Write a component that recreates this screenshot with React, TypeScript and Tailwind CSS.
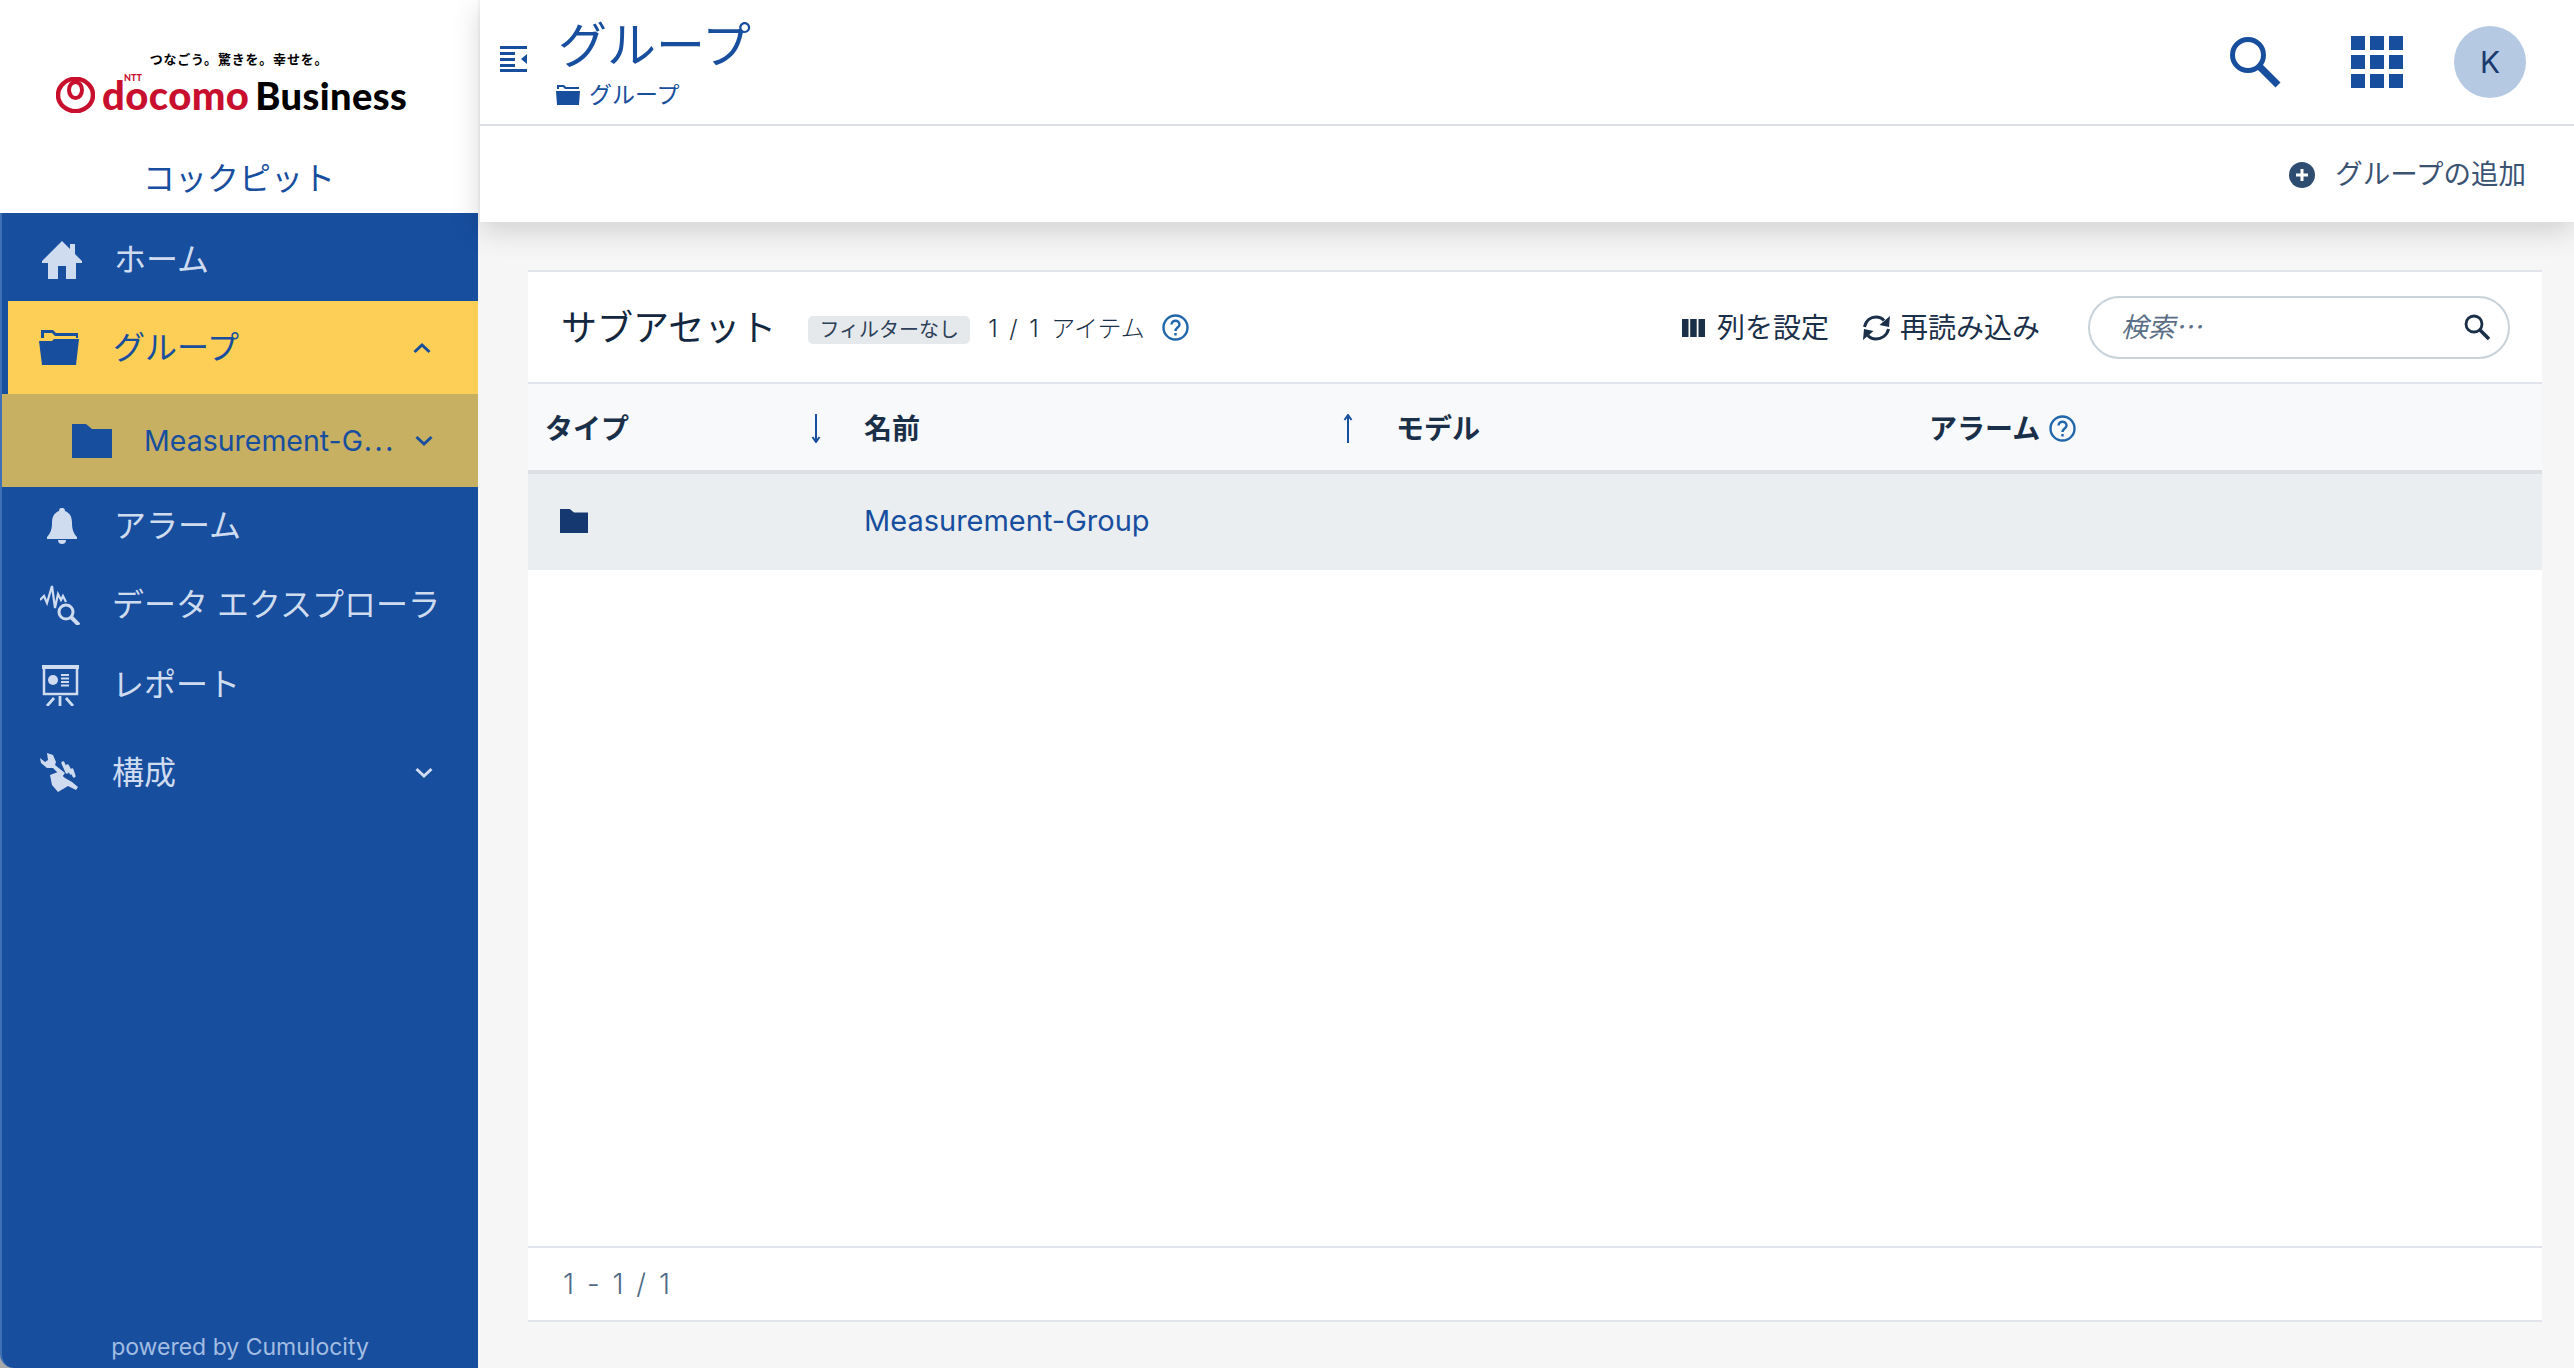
import { ReactNode } from "react";

const blue = "#174e9e";

function HomeIcon() {
  return (
    <svg width="40" height="38" viewBox="0 0 40 38" fill="#cfdcf0">
      <path d="M20 0 L28 8 V3 H33 V13 L40 20 V22 H34 V38 H24 V25 H16 V38 H6 V22 H0 V20 Z" />
    </svg>
  );
}

function FolderOpenIcon() {
  return (
    <svg width="40" height="35" viewBox="0 0 40 35" fill={blue}>
      <path d="M2 0 H14 L17 3 H39 V8 H37 V6 H16 L13 3 H5 V8 H2 Z" />
      <path d="M0 11 H13 L15 9 H40 L37 35 H3 Z" />
    </svg>
  );
}

function FolderIcon({ w, h, color }: { w: number; h: number; color: string }) {
  return (
    <svg width={w} height={h} viewBox="0 0 40 34" fill={color}>
      <path d="M0 0 H14 L20 5 H40 V34 H0 Z" />
    </svg>
  );
}

function BellIcon() {
  return (
    <svg width="30" height="36" viewBox="0 0 30 36" fill="#cfdcf0">
      <path d="M15 0 C17 0 18 1 18 3 C23 5 25 9 25 15 C25 22 27 26 30 29 V31 H0 V29 C3 26 5 22 5 15 C5 9 7 5 12 3 C12 1 13 0 15 0 Z" />
      <path d="M11 32 H19 C19 35 17 36 15 36 C13 36 11 35 11 32 Z" />
    </svg>
  );
}

function DataIcon() {
  return (
    <svg width="40" height="40" viewBox="0 0 40 40" fill="none" stroke="#cfdcf0" strokeWidth="2.2">
      <path d="M0 15 L4 11 L7 18 L12 1 L15 23 L18 9 L21 15 L23 11 L26 17" />
      <circle cx="26" cy="27" r="7" strokeWidth="3" />
      <path d="M31 32 L39 40" strokeWidth="4" />
    </svg>
  );
}

function ReportIcon() {
  return (
    <svg width="37" height="41" viewBox="0 0 37 41" fill="none" stroke="#cfdcf0">
      <path d="M0 2 H37" strokeWidth="4" />
      <path d="M2 3 V29 H35 V3" strokeWidth="2.5" />
      <circle cx="11" cy="15" r="5" fill="#cfdcf0" stroke="none" />
      <path d="M19 10 H27 M19 13.5 H27 M19 17 H27 M19 20.5 H27" strokeWidth="2" />
      <path d="M18 31 V41 M12 33 L5 41 M24 33 L31 41" strokeWidth="2.8" />
    </svg>
  );
}

function ConfigIcon() {
  return (
    <svg width="40" height="41" viewBox="0 0 40 41" fill="#cfdcf0">
      <path d="M7 1 L13 3 L16 10 L15 13 L25 21 L22 25 L13 16 L7 16 L1 11 L0 6 L5 10 L8 8 Z" />
      <path d="M10 23 L18 20 L25 26 L32 30 L38 35 L36 38 L28 34 L18 40 L12 33 Z" />
      <path d="M23 11 L27 20 M27.5 14 L31 21 M32 18 L34 24" stroke="#cfdcf0" strokeWidth="3.2" strokeLinecap="round" fill="none" />
    </svg>
  );
}

function Chevron({ up, color }: { up?: boolean; color: string }) {
  return (
    <svg width="18" height="12" viewBox="0 0 18 12" fill="none" stroke={color} strokeWidth="3">
      <path d={up ? "M1.5 10 L9 3 L16.5 10" : "M1.5 2 L9 9 L16.5 2"} />
    </svg>
  );
}

function HelpIcon() {
  return (
    <svg width="27" height="27" viewBox="0 0 27 27" fill="none" stroke="#1f66ab" strokeWidth="2.4">
      <circle cx="13.5" cy="13.5" r="12" />
      <path d="M9.5 10.5 C9.5 5.5 17.5 5.5 17.5 10.5 C17.5 13.5 13.5 13.5 13.5 17" />
      <path d="M13.5 19 V21.5" />
    </svg>
  );
}

function NavItem({ icon, label, h, pl, chevron }: { icon: ReactNode; label: string; h: string; pl: string; chevron?: boolean }) {
  return (
    <div className={`flex items-center ${h} ${pl} text-[#cfdcf0] text-[32px]`}>
      <div className="mr-[32px] flex w-[40px] shrink-0 justify-center">{icon}</div>
      <span className="flex-1 whitespace-nowrap">{label}</span>
      {chevron && (
        <span className="mr-[45px]">
          <Chevron color="#cfdcf0" />
        </span>
      )}
    </div>
  );
}

function Sidebar() {
  return (
    <aside className="flex h-full w-[478px] shrink-0 flex-col bg-[#a8a8a8]">
      <div className="flex h-[213px] flex-col items-center bg-white">
        <div className="mt-[49px] whitespace-nowrap text-[13px] font-bold leading-[20px] tracking-[0.8px] text-black">つなごう。驚きを。幸せを。</div>
        <div className="mt-[6px] flex items-center gap-[7px] self-start pl-[56px]">
          <svg width="39" height="36" viewBox="0 0 39 36" fill="none" stroke="#c8102e">
            <ellipse cx="19.5" cy="18" rx="17.5" ry="16.2" strokeWidth="4.5" />
            <ellipse cx="19.5" cy="13" rx="6.5" ry="8" strokeWidth="4" />
          </svg>
          <div className="flex items-baseline gap-[6px] text-[38px] font-black leading-[40px] [font-family:'Lato','Liberation_Sans',sans-serif]">
            <span className="relative text-[40px] tracking-[0.4px] text-[#c8102e]">
              docomo
              <span className="absolute left-[22px] top-[-2px] text-[9px] leading-[10px] tracking-normal">NTT</span>
            </span>
            <span className="tracking-[0.4px] text-black">Business</span>
          </div>
        </div>
        <div className="mt-[42px] text-[32px] leading-[44px] text-[#174e9e]">コックピット</div>
      </div>
      <nav className="flex flex-1 flex-col rounded-bl-[14px] border-l-2 border-[#3f6fb5] bg-[#174e9e]">
        <NavItem icon={<HomeIcon />} label="ホーム" h="h-[88px] pt-[6px]" pl="pl-[40px]" />
        <div className="ml-[6px] flex h-[93px] items-center bg-[#fdcf56] pl-[31px] text-[32px] text-[#174e9e]">
          <div className="mr-[34px] flex w-[40px] justify-center">
            <FolderOpenIcon />
          </div>
          <span className="flex-1">グループ</span>
          <span className="mr-[47px]">
            <Chevron up color={blue} />
          </span>
        </div>
        <div className="flex h-[93px] items-center bg-[#c8b063] pl-[70px] text-[#174e9e]">
          <FolderIcon w={40} h={34} color={blue} />
          <span className="ml-[32px] flex-1 whitespace-nowrap text-[28.5px]">
            Measurement-G<span className="[font-family:'Noto_Sans_CJK_JP',sans-serif]">⋯</span>
          </span>
          <span className="mr-[45px]">
            <Chevron color={blue} />
          </span>
        </div>
        <NavItem icon={<BellIcon />} label="アラーム" h="h-[78px]" pl="pl-[40px]" />
        <NavItem icon={<DataIcon />} label="データ エクスプローラ" h="h-[80px]" pl="pl-[38px]" />
        <NavItem icon={<ReportIcon />} label="レポート" h="h-[80px]" pl="pl-[38px]" />
        <NavItem icon={<ConfigIcon />} label="構成" h="h-[93px] pt-[2px]" pl="pl-[38px]" chevron />
        <div className="mt-auto pb-[6px] text-center text-[23px] leading-[30px] text-[#a3bde2]">powered by Cumulocity</div>
      </nav>
    </aside>
  );
}

function Header() {
  return (
    <header className="relative z-10 bg-white shadow-[0_8px_28px_rgba(0,0,0,0.16)]">
      <div className="flex h-[126px] items-center border-b-2 border-[#dcdfe4] pl-[20px] pr-[48px]">
        <svg className="mt-[-6px]" width="27" height="26" viewBox="0 0 27 26" fill={blue}>
          <path d="M0 0 H27 V3 H0 Z M0 6 H15 V9 H0 Z M0 12 H15 V15 H0 Z M0 18 H15 V21 H0 Z M0 23 H27 V26 H0 Z" />
          <path d="M27 8 V18 L21 13 Z" />
        </svg>
        <div className="ml-[31px] flex flex-col">
          <h1 className="text-[49px] font-normal leading-[62px] text-[#174e9e]">グループ</h1>
          <div className="mt-[3px] flex items-center gap-[9px] text-[23px] leading-[30px] text-[#174e9e]">
            <svg className="ml-[-2px]" width="24" height="20" viewBox="0 0 24 20" fill={blue}>
              <path d="M1 0 H8 L10 2 H23 V4 H9 L7 2 H3 V4 H1 Z" />
              <path d="M0 6 H24 L23 20 H1 Z" />
            </svg>
            グループ
          </div>
        </div>
        <div className="ml-auto flex items-center">
          <svg width="51" height="51" viewBox="0 0 51 51" fill="none" stroke={blue}>
            <circle cx="18" cy="18" r="15.5" strokeWidth="5" />
            <path d="M29 29 L48 48" strokeWidth="7" />
          </svg>
          <svg className="ml-[70px]" width="52" height="52" viewBox="0 0 52 52" fill={blue}>
            <path d="M0 0 H14 V14 H0 Z M19 0 H33 V14 H19 Z M38 0 H52 V14 H38 Z M0 19 H14 V33 H0 Z M19 19 H33 V33 H19 Z M38 19 H52 V33 H38 Z M0 38 H14 V52 H0 Z M19 38 H33 V52 H19 Z M38 38 H52 V52 H38 Z" />
          </svg>
          <div className="ml-[51px] flex h-[72px] w-[72px] items-center justify-center rounded-full bg-[#b5c9e2] text-[30px] text-[#1a3a6e]">K</div>
        </div>
      </div>
      <div className="flex h-[96px] items-center justify-end pr-[48px] pt-[2px] text-[27.5px] text-[#3a5373]">
        <svg className="mr-[20px]" width="26" height="26" viewBox="0 0 26 26">
          <circle cx="13" cy="13" r="13" fill="#2e4d70" />
          <path d="M13 7 V19 M7 13 H19" stroke="#fff" strokeWidth="3" />
        </svg>
        グループの追加
      </div>
    </header>
  );
}

function Arrow({ up }: { up?: boolean }) {
  return (
    <svg width="10" height="29" viewBox="0 0 10 29" fill="none" stroke={blue} strokeWidth="2">
      {up ? <path d="M5 29 V3 M1.5 6 L5 1 L8.5 6" /> : <path d="M5 0 V26 M1.5 23 L5 28 L8.5 23" />}
    </svg>
  );
}

function AssetCard() {
  return (
    <section className="flex flex-1 flex-col border-y-2 border-[#e1e4ea] bg-white">
      <div className="flex h-[112px] shrink-0 items-center border-b-2 border-[#e1e4ea] pl-[33px] pr-[32px] text-[#1a2f48]">
        <h2 className="mt-[2px] text-[36px] font-normal leading-[48px] text-[#13273f]">サブアセット</h2>
        <span className="ml-[32px] mt-[5px] flex h-[28px] w-[162px] items-center justify-center rounded-[5px] bg-[#e6e9ec] text-[20px] text-[#2c4058]">フィルターなし</span>
        <span className="ml-[18px] mt-[4px] whitespace-nowrap text-[24px] font-light">
          <span className="tracking-[2.4px]">1 / 1 </span>
          <span className="ml-[1px]">アイテム</span>
        </span>
        <span className="ml-[17px] flex">
          <HelpIcon />
        </span>
        <div className="ml-auto flex items-center text-[28px]">
          <svg className="mt-[2px]" width="23" height="18" viewBox="0 0 23 18" fill="#1a2f48">
            <path d="M0 0 H6.5 V18 H0 Z M8.2 0 H14.7 V18 H8.2 Z M16.5 0 H23 V18 H16.5 Z" />
          </svg>
          <span className="ml-[12px] mt-[2px]">列を設定</span>
          <svg className="ml-[34px] mt-[2px]" width="27" height="26" viewBox="0 0 27 26" fill="#1a2f48">
            <path d="M1.5 12 C3 5 8 2 13 2 C16 2 19 3 21 5.5 M25.5 14 C24 21 18 24 13 24 C10 24 7 23 5 20.5" fill="none" stroke="#1a2f48" strokeWidth="3" />
            <path d="M27 1 L26 12 L16.5 10 Z M0 25 L1 14 L10.5 16 Z" />
          </svg>
          <span className="ml-[10px] mt-[2px]">再読み込み</span>
          <div className="ml-[48px] flex h-[63px] w-[422px] items-center rounded-full border-2 border-[#c8d2d8] pl-[31px] pr-[18px]">
            <span className="mt-[2px] flex-1 text-[27px] italic text-[#5a6f85]">検索⋯</span>
            <svg width="26" height="26" viewBox="0 0 26 26" fill="none" stroke="#1a2f48">
              <circle cx="10" cy="10" r="8" strokeWidth="2.8" />
              <path d="M16 16 L25 25" strokeWidth="3.6" />
            </svg>
          </div>
        </div>
      </div>
      <div className="grid h-[90px] shrink-0 grid-cols-[336px_532px_533px_1fr] items-center border-b-4 border-[#dcdfe4] bg-[#f7f9fb] pt-[3px] text-[28px] font-bold text-[#1a2f48]">
        <div className="flex items-center justify-between pl-[17px] pr-[43px]">
          タイプ
          <Arrow />
        </div>
        <div className="flex items-center justify-between pr-[43px]">
          名前
          <Arrow up />
        </div>
        <div>モデル</div>
        <div className="flex items-center gap-[9px]">
          アラーム
          <HelpIcon />
        </div>
      </div>
      <div className="grid h-[96px] shrink-0 grid-cols-[336px_1fr] items-center bg-[#ebeef0] pb-[2px]">
        <div className="pl-[32px]">
          <FolderIcon w={28} h={24} color="#14386f" />
        </div>
        <div className="text-[29px] text-[#174e9e]">Measurement-Group</div>
      </div>
      <div className="flex-1" />
      <div className="flex h-[74px] shrink-0 items-center border-t-2 border-[#e1e4ea] pl-[35px] text-[28px] font-light tracking-[2.5px] text-[#4e6a85]">1 - 1 / 1</div>
    </section>
  );
}

export default function App() {
  return (
    <div className="flex h-[1368px] w-[2574px] overflow-hidden bg-[#f6f6f6] [font-family:'Inter','Noto_Sans_CJK_JP',sans-serif]">
      <Sidebar />
      <div className="ml-[2px] flex min-w-0 flex-1 flex-col">
        <Header />
        <main className="flex flex-1 flex-col pb-[46px] pl-[48px] pr-[32px] pt-[48px]">
          <AssetCard />
        </main>
      </div>
    </div>
  );
}
